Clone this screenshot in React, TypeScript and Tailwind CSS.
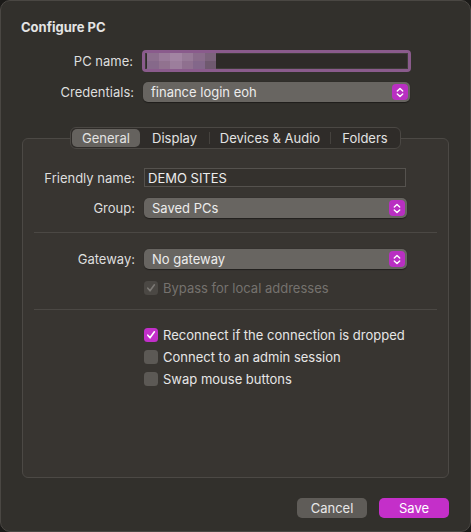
import React from 'react'

// Configure PC sheet — macOS-style dark dialog with tabbed settings panel.

const font = { fontFamily: 'Inter, "Noto Sans", sans-serif' }

function Stepper() {
  return (
    <span className="flex h-[16px] w-[16px] items-center justify-center rounded-[4px] bg-[#b92fc2]">
      <svg width="8" height="11" viewBox="0 0 8 11" fill="none">
        <path d="M1.3 4 L4 1.4 L6.7 4" stroke="white" strokeWidth="1.4" strokeLinecap="round" strokeLinejoin="round" />
        <path d="M1.3 7 L4 9.6 L6.7 7" stroke="white" strokeWidth="1.4" strokeLinecap="round" strokeLinejoin="round" />
      </svg>
    </span>
  )
}

function Popup({ value, className }: { value: string; className: string }) {
  return (
    <div
      className={`flex h-[20px] items-center justify-between rounded-[5px] bg-[#686561] pl-[8px] pr-[2px] text-[13px] text-[#ececec] shadow-[0_0.5px_1px_rgba(0,0,0,0.4)] ${className}`}
    >
      <span>{value}</span>
      <Stepper />
    </div>
  )
}

function Row({
  label,
  labelW,
  children,
  className = '',
}: {
  label: string
  labelW: string
  children: React.ReactNode
  className?: string
}) {
  return (
    <div className={`flex items-center ${className}`}>
      <span className={`${labelW} shrink-0 pr-[9px] text-right text-[13px] text-[#dedede]`}>{label}</span>
      {children}
    </div>
  )
}

function Checkbox({
  label,
  checked = false,
  disabled = false,
}: {
  label: string
  checked?: boolean
  disabled?: boolean
}) {
  let box = 'bg-[#5c5955]'
  if (checked && !disabled) box = 'bg-[#c22fca]'
  if (disabled) box = 'bg-[#4b4844]'
  return (
    <div className="flex h-[16px] items-center gap-[5px]">
      <span className={`flex h-[14px] w-[14px] items-center justify-center rounded-[3.5px] ${box}`}>
        {checked && (
          <svg width="10" height="10" viewBox="0 0 10 10" fill="none">
            <path
              d="M1.8 5.2 L4 7.8 L8.4 1.8"
              stroke={disabled ? '#7c7975' : 'white'}
              strokeWidth="1.6"
              strokeLinecap="round"
              strokeLinejoin="round"
            />
          </svg>
        )}
      </span>
      <span className={`text-[13px] ${disabled ? 'text-[#75726e]' : 'text-[#e6e6e6]'}`}>{label}</span>
    </div>
  )
}

const mosaic = [
  ['#8d6f8e', '#9a7b9a', '#a284a2', '#977a97', '#8a6c8b', '#7c637c'],
  ['#86698a', '#91728f', '#9c7e9c', '#8f708f', '#83678a', '#6f596f'],
]

function RedactedField() {
  return (
    <div className="h-[22px] w-[269px] rounded-[4px] bg-[#8a5b8c] p-[3px]">
      <div className="flex h-full w-full items-center bg-[#2e2b28] pl-[2px] shadow-[inset_0_0_0_1px_#3f3c39]">
        <div className="flex flex-col">
          {mosaic.map((r, i) => (
            <div key={i} className="flex">
              {r.map((c, j) => (
                <span key={j} className="h-[8px] w-[11.5px]" style={{ background: c }} />
              ))}
            </div>
          ))}
        </div>
      </div>
    </div>
  )
}

const tabs = ['General', 'Display', 'Devices & Audio', 'Folders']
const tabW = ['w-[68px]', 'w-[69px]', 'w-[120px]', 'w-[68px]']

export default function App() {
  return (
    <div className="h-[532px] w-[471px] bg-[#1b1a18] leading-[16px]" style={font}>
      <div className="flex h-full w-full flex-col rounded-[10px] border border-[#4a4743] bg-[#32302c] px-[20px]">
        <h1 className="mt-[18px] text-[13px] font-bold text-[#e4e4e4]">Configure PC</h1>

        <Row label="PC name:" labelW="w-[121px]" className="mt-[15px]">
          <RedactedField />
        </Row>
        <Row label="Credentials:" labelW="w-[122px]" className="mt-[10px]">
          <Popup value="finance login eoh" className="w-[267px]" />
        </Row>

        <div className="relative z-10 mt-[25px] -mb-[11px] flex h-[22px] self-center rounded-[6px] border border-[#4b4844] bg-[#2f2c29] p-[1px] text-[13px] text-[#e2e2e2]">
          {tabs.map((t, i) => (
            <div key={t} className="flex items-center">
              {i > 1 && <span className="h-[12px] w-px bg-[#45423e]" />}
              <span
                className={`flex h-full items-center justify-center rounded-[5px] ${tabW[i]} ${
                  i === 0 ? 'bg-[#65625e]' : ''
                }`}
              >
                {t}
              </span>
            </div>
          ))}
        </div>

        <div className="ml-[1px] mr-[1px] flex h-[340px] flex-col rounded-[6px] border border-[#4c4945] bg-[#383531]">
          <Row label="Friendly name:" labelW="w-[121px]" className="mt-[29px]">
            <div className="flex h-[19px] w-[262px] items-center border border-[#55524e] bg-[#34312d] pl-[3px] text-[13px] text-[#ececec]">
              DEMO SITES
            </div>
          </Row>
          <Row label="Group:" labelW="w-[121px]" className="mt-[11px]">
            <Popup value="Saved PCs" className="w-[263px]" />
          </Row>

          <div className="mx-[11px] mt-[14px] h-px bg-[#4b4844]" />

          <Row label="Gateway:" labelW="w-[121px]" className="mt-[16px]">
            <Popup value="No gateway" className="w-[263px]" />
          </Row>
          <div className="ml-[121px] mt-[11px]">
            <Checkbox label="Bypass for local addresses" checked disabled />
          </div>

          <div className="mx-[11px] mt-[13px] h-px bg-[#4b4844]" />

          <div className="ml-[121px] mt-[17px] flex flex-col gap-[6px]">
            <Checkbox label="Reconnect if the connection is dropped" checked />
            <Checkbox label="Connect to an admin session" />
            <Checkbox label="Swap mouse buttons" />
          </div>
        </div>

        <div className="mt-[20px] flex justify-end gap-[12px] pr-[1px]">
          <button className="h-[20px] w-[70px] rounded-[5px] bg-[#5f5c58] text-[13px] text-[#e8e8e8]">
            Cancel
          </button>
          <button className="h-[20px] w-[70px] rounded-[5px] bg-[#c42fc9] text-[13px] text-white">
            Save
          </button>
        </div>
      </div>
    </div>
  )
}
